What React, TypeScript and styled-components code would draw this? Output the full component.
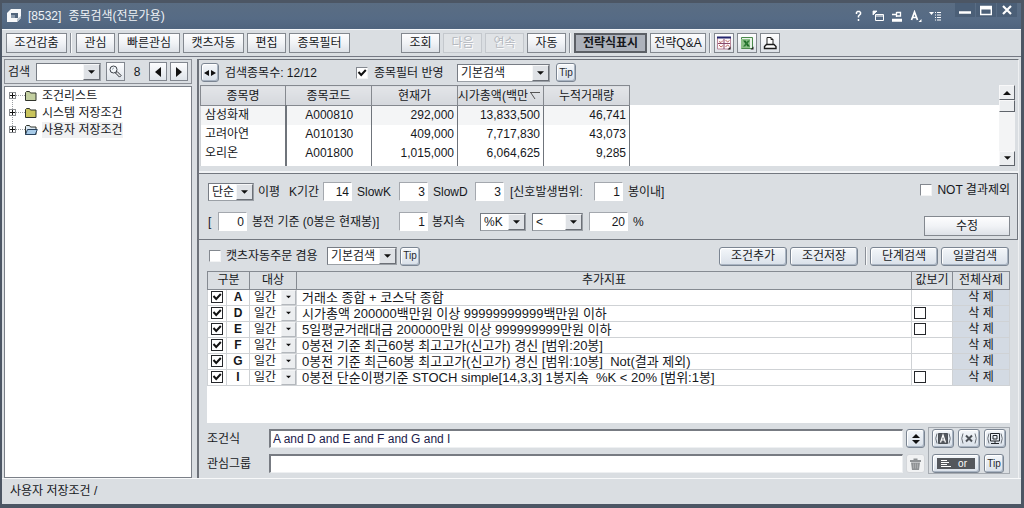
import React, { useState } from "react";
import styled, { createGlobalStyle, css } from "styled-components";

const face = "#dadee2";
const line = "#858a91";
const ink = "#16181c";

const Global = createGlobalStyle`
  * { box-sizing: border-box; }
  body { margin: 0; background: #4c5664; }
  body, button, input, select, table {
    font-family: "Liberation Sans", "Noto Sans CJK KR", sans-serif;
    font-size: 12px;
    line-height: 16px;
    color: ${ink};
  }
  button, input, select { margin: 0; padding: 0; border-radius: 0; }
`;

/* ---------- frame ---------- */

const Frame = styled.div`
  display: flex;
  flex-direction: column;
  min-height: 100vh;
  border: solid #4c5664;
  border-width: 3px 3px 4px 2px;
  background: ${face};
  white-space: nowrap;
`;

const TitleBar = styled.header`
  display: flex;
  align-items: center;
  height: 26px;
  padding: 0 4px;
  background: linear-gradient(#5a6d83, #566b85 60%, #4f647e);
  color: #eef2f6;
`;

const Title = styled.h1`
  flex: 1;
  margin: 0 0 0 6px;
  font-size: 12px;
  line-height: 18px;
  font-weight: 400;
`;

const Code = styled.span`
  margin-right: 7px;
`;

const TitleTools = styled.div`
  display: flex;
  gap: 7px;
  margin-right: 14px;
`;

const WindowTools = styled.div`
  display: flex;
  gap: 1px;
  align-self: flex-start;
`;

const TitleButton = styled.button<{ $framed?: boolean }>`
  display: grid;
  place-items: center;
  width: ${(p) => (p.$framed ? 20 : 12)}px;
  height: ${(p) => (p.$framed ? 14 : 16)}px;
  border: 0;
  background: ${(p) => (p.$framed ? "#4b5f77" : "none")};
  color: #fff;
`;

const Toolbar = styled.nav`
  display: flex;
  align-items: center;
  gap: 3px;
  height: 28px;
  padding: 0 4px;
  border-top: 1px solid #f4f6f8;
  border-bottom: 1px solid #747883;
`;

const Group = styled.div<{ $push?: number }>`
  display: flex;
  align-items: center;
  gap: 3px;
  margin-left: ${(p) => p.$push ?? 0}px;
`;

const Divider = styled.span<{ $h?: number }>`
  width: 2px;
  height: ${(p) => p.$h ?? 20}px;
  border-left: 1px solid #8b9098;
  border-right: 1px solid #f8f9fa;
`;

const ToolButton = styled.button<{ $w: number; $active?: boolean }>`
  display: grid;
  place-items: center;
  width: ${(p) => p.$w}px;
  height: 20px;
  border: 1px solid #83888f;
  background: linear-gradient(#fdfdfe, #f1f3f6 50%, #dde1e7);
  &:disabled {
    color: #b4b8be;
    border-color: #c4c8cd;
    background: #e0e3e6;
    text-shadow: 1px 1px #fff;
  }
  ${(p) =>
    p.$active &&
    css`
      border: 2px solid #5c6066;
      background: #adb2bb;
      font-weight: 700;
    `}
`;

/* ---------- shared controls ---------- */

const RoundButton = styled.button<{ $w: number; $faint?: boolean }>`
  display: grid;
  place-items: center;
  width: ${(p) => p.$w}px;
  height: 19px;
  flex: none;
  border: 1px solid #7b8592;
  border-radius: 3px;
  background: linear-gradient(#f4f7fa, #d9e0e9);
  box-shadow: inset -1px -1px #a9b4c2, inset 1px 1px #fff;
  ${(p) =>
    p.$faint &&
    css`
      border-color: #d3d6da;
      background: #f1f2f3;
      box-shadow: none;
    `}
`;

const TipButton = styled(RoundButton)`
  font-size: 10px;
  line-height: 12px;
  color: #23272e;
`;

const SelectBox = styled.span<{ $w: number }>`
  display: grid;
  grid-template-columns: 1fr 17px;
  width: ${(p) => p.$w}px;
  height: 18px;
  flex: none;
  border: 1px solid #777c84;
  border-right-color: #9ba0a6;
  border-bottom-color: #9ba0a6;
  background: #fff;
  > select {
    grid-area: 1 / 1 / 2 / 3;
    appearance: none;
    width: 100%;
    height: 16px;
    padding: 0 0 0 3px;
    border: 0;
    background: transparent;
    outline: none;
  }
`;

const SelectArrow = styled.span`
  grid-area: 1 / 2;
  display: grid;
  place-items: center;
  height: 16px;
  border: 1px solid #f6f7f8;
  border-right-color: #6c7077;
  border-bottom-color: #6c7077;
  background: #dfe2e6;
  pointer-events: none;
`;

const CheckBox = styled.span<{ $bold?: boolean }>`
  display: grid;
  width: 12px;
  height: 12px;
  flex: none;
  > * {
    grid-area: 1 / 1;
  }
  > input {
    appearance: none;
    width: 12px;
    height: 12px;
    background: #fff;
    border: 1px solid ${(p) => (p.$bold ? "#25272b" : "#f2f3f4")};
    ${(p) => !p.$bold && "border-top-color: #83888f; border-left-color: #83888f;"}
  }
  > svg {
    display: none;
    pointer-events: none;
  }
  > input:checked + svg {
    display: block;
  }
`;

const NumberField = styled.input<{ $w?: number }>`
  width: ${(p) => p.$w ?? 29}px;
  height: 19px;
  flex: none;
  padding: 0 2px;
  border: 1px solid #fff;
  border-top-color: #a4a8ae;
  border-left-color: #a4a8ae;
  background: #fff;
  text-align: right;
  outline: none;
`;

const Text = styled.span<{ $w?: number }>`
  flex: none;
  width: ${(p) => (p.$w ? `${p.$w}px` : "auto")};
`;

const LabelText = styled.label<{ $w?: number }>`
  flex: none;
  width: ${(p) => (p.$w ? `${p.$w}px` : "auto")};
`;

/* ---------- layout of the two panes ---------- */

const Body = styled.div`
  display: flex;
  flex: 1;
  gap: 5px;
  padding: 2px 2px 0;
  border-bottom: 1px solid #f8f9fa;
`;

const Side = styled.aside`
  display: flex;
  flex-direction: column;
  width: 188px;
  flex: none;
`;

const SearchRow = styled.div`
  display: flex;
  align-items: center;
  height: 25px;
  padding: 0 3px;
  margin-bottom: 2px;
  border: 1px solid #8b8f96;
`;

const SmallButton = styled.button<{ $w?: number }>`
  display: grid;
  place-items: center;
  width: ${(p) => p.$w ?? 18}px;
  height: 19px;
  flex: none;
  border: 1px solid #82878f;
  background: linear-gradient(#fcfdfe, #dfe4ea);
`;

const SearchCount = styled.output`
  flex: 1;
  text-align: center;
`;

const Tree = styled.ul`
  flex: 1;
  margin: 0;
  padding: 0 0 0 3px;
  list-style: none;
  background: #fff;
  border: 1px solid #7b8088;
`;

const TreeItem = styled.li`
  display: flex;
  align-items: center;
  height: 17px;
  > svg {
    flex: none;
  }
`;

const TreeName = styled.span<{ $on?: boolean }>`
  margin-left: 4px;
  background: ${(p) => (p.$on ? "#f0f1f2" : "none")};
`;

const Main = styled.main`
  display: flex;
  flex-direction: column;
  flex: 1;
  min-width: 0;
  border: 1px solid #6d727a;
  border-left-width: 2px;
  border-right-color: #eef0f2;
  border-bottom: 0;
`;

const FilterRow = styled.div`
  display: flex;
  align-items: center;
  height: 25px;
  padding: 0 2px;
`;

const Results = styled.div`
  display: flex;
  margin: 0 3px 0 1px;
  background: linear-gradient(${face} 20px, #fff 20px);
`;

const ResultTable = styled.table`
  width: 429px;
  flex: none;
  border-collapse: collapse;
  table-layout: fixed;
  margin-right: auto;
  th {
    height: 20px;
    padding: 0;
    border: 1px solid #85898f;
    background: linear-gradient(#e3e5e8, #d5d8dd);
    font-weight: 400;
    overflow: hidden;
  }
  td {
    height: 19px;
    padding: 0 3px 0 4px;
    border: solid #6f747b;
    border-width: 0 1px;
    text-align: right;
  }
  td:first-child {
    text-align: left;
    border-left-color: #d0d3d7;
    border-right-width: 2px;
  }
  td:nth-child(2) {
    text-align: center;
  }
  tbody tr:first-child {
    background: #f4f5f6;
  }
  tbody tr:last-child td {
    height: 22px;
    padding-bottom: 3px;
  }
`;

const SortHead = styled.span`
  display: flex;
  align-items: center;
  justify-content: flex-end;
  gap: 2px;
  padding-right: 3px;
  overflow: hidden;
  > svg {
    flex: none;
  }
`;

const ScrollBar = styled.div`
  display: flex;
  flex-direction: column;
  width: 16px;
  background: #f3f4f5;
`;

const ScrollPart = styled.button<{ $h: number }>`
  display: grid;
  place-items: center;
  height: ${(p) => p.$h}px;
  border: 1px solid #f8f8f9;
  border-right-color: #5f646b;
  border-bottom-color: #5f646b;
  background: #eceef0;
  &:last-child {
    margin-top: auto;
  }
`;

const ConditionPanel = styled.section`
  display: flex;
  justify-content: space-between;
  margin-top: 7px;
  border: 1px solid #72777f;
  border-left: 0;
  box-shadow: 0 -2px #f2f4f6;
`;

const Fields = styled.div`
  display: flex;
  flex-direction: column;
  gap: 10px;
  padding: 8px 0 7px 9px;
`;

const FieldRow = styled.div`
  display: flex;
  align-items: center;
  height: 20px;
`;

const ApplyColumn = styled.div`
  display: flex;
  flex-direction: column;
  align-items: flex-end;
  justify-content: space-between;
  padding: 8px 7px 3px 0;
`;

const Pair = styled.div`
  display: flex;
  align-items: center;
  gap: 5px;
`;

const ActionGroup = styled.div`
  display: flex;
  align-items: center;
  gap: 3px;
  margin-left: auto;
  padding-right: 1px;
`;

const ListPanel = styled.section`
  display: flex;
  flex-direction: column;
  flex: 1;
  padding: 7px 8px 4px 8px;
`;

const ListTools = styled.div`
  display: flex;
  align-items: center;
  height: 19px;
  margin-bottom: 5px;
  padding-left: 2px;
`;

const ListArea = styled.div`
  flex: 1;
  background: #fff;
  padding-bottom: 32px;
`;

const ConditionTable = styled.table`
  width: 100%;
  border-collapse: collapse;
  table-layout: fixed;
  th {
    height: 18px;
    padding: 0;
    border: 1px solid ${line};
    background: ${face};
    font-weight: 400;
  }
  td {
    height: 16px;
    padding: 0;
    border: 1px solid #cfd2d5;
    line-height: 15px;
  }
`;

const CheckCell = styled.td`
  > ${CheckBox} {
    margin: 0 auto;
  }
`;

const KeyCell = styled.td`
  text-align: center;
  font-weight: 700;
`;

const TermCell = styled.td`
  > span {
    display: flex;
    align-items: center;
    justify-content: space-between;
    padding-left: 4px;
  }
`;

const DropButton = styled.button`
  display: grid;
  place-items: center;
  width: 15px;
  height: 15px;
  border: 1px solid #f4f5f6;
  border-right-color: #b4b8bd;
  border-bottom-color: #b4b8bd;
  background: #eceef0;
`;

const DescCell = styled.td`
  && {
    padding-left: 5px;
    font-size: 13px;
    white-space: pre;
  }
`;

const ShowCell = styled.td`
  && {
    padding-left: 2px;
  }
`;

const DeleteButton = styled.button`
  display: block;
  width: 100%;
  height: 15px;
  border: 0;
  background: #d3dae3;
  line-height: 15px;
`;

const FormulaArea = styled.div`
  display: flex;
  align-items: flex-start;
  gap: 3px;
  margin-top: 4px;
`;

const FormulaRows = styled.div`
  display: grid;
  grid-template-columns: 59px 1fr 19px;
  row-gap: 6px;
  column-gap: 3px;
  flex: 1;
  align-items: center;
  padding-top: 2px;
`;

const FormulaInput = styled.input`
  width: 100%;
  height: 19px;
  padding: 0 2px;
  border: 1px solid #eef0f2;
  border-top: 2px solid #777b82;
  border-left: 2px solid #777b82;
  background: #fff;
  color: #1c1c4c;
  outline: none;
`;

const InsertPanel = styled.div`
  display: grid;
  grid-template-columns: repeat(3, 22px);
  column-gap: 4px;
  row-gap: 6px;
  padding: 1px 3px 0;
  border: 1px solid #a6abb1;
`;

const OrButton = styled(RoundButton)`
  grid-column: span 2;
`;

const OrFace = styled.span`
  display: flex;
  align-items: center;
  justify-content: space-between;
  width: 38px;
  height: 11px;
  padding: 0 8px 0 4px;
  background: #54575c;
  color: #fff;
  font-size: 10px;
  line-height: 10px;
`;

const StatusBar = styled.footer`
  height: 25px;
  padding: 4px 8px;
`;

/* ---------- drawings ---------- */

const Down = ({ w = 7 }: { w?: number }) => (
  <svg width={w} height="4" viewBox="0 0 8 4">
    <path d="M0 0h8L4 4z" fill="#111" />
  </svg>
);

const Tick = () => (
  <svg width="12" height="12" viewBox="0 0 12 12">
    <path d="M2.5 5l2.7 3L9.8 3" fill="none" stroke="#111" strokeWidth="2" />
  </svg>
);

const AppIcon = () => (
  <svg width="16" height="16" viewBox="0 0 16 16">
    <path d="M1 5L5 1h10v9l-4 4H1z" fill="#f7f8fa" />
    <path d="M5 5h7v5H5z" fill="#51647c" />
    <path d="M5 7h4v3H5z" fill="#8c9bad" />
    <path d="M11 14l4-4V8l-4 3z" fill="#b9c3cf" />
  </svg>
);

const Magnifier = () => (
  <svg width="13" height="13" viewBox="0 0 13 13" fill="none">
    <circle cx="4.5" cy="4.5" r="3.5" stroke="#3c4148" fill="#f4f8fb" />
    <path d="M3 4.5L5 2.7" stroke="#8d98a4" />
    <path d="M6.5 8l1.6-1.5 4 4-1.6 1.6z" fill="#e8eaec" stroke="#2e3238" />
  </svg>
);

const Branch = ({ first, last }: { first?: boolean; last?: boolean }) => (
  <svg width="17" height="17" viewBox="0 0 17 17">
    <path
      d={`${first ? "" : "M4.5 0v6"}${last ? "" : "M4.5 11v6"}M8 8.5h9`}
      stroke="#9a9da1"
      strokeDasharray="1 1"
    />
    <rect x="1.500" y="5.500" width="6" height="6" fill="#fff" stroke="#8a8d91" />
    <path d="M2 8.500h5M4.500 6v5" stroke="#111" />
  </svg>
);

const Folder = ({ fill, open }: { fill: string; open?: boolean }) => (
  <svg width="13" height="12" viewBox="0 0 13 12" stroke="#30342c">
    <path d="M.5 10.500V2.500l1-1h3l1 1.500h5.500v7.500z" fill={fill} />
    {open && <path d="M.5 10.500l2-5h9.800l-2 5z" fill="#a8cbe8" stroke="#28425e" />}
  </svg>
);

const ToolIcon = ({ kind }: { kind: "chart" | "sheet" | "print" }) => (
  <svg width="14" height="14" viewBox="0 0 14 14" fill="none">
    {kind === "chart" && (
      <>
        <path d="M.5 1.500h13v11.500H.5z" fill="#fdf6f8" stroke="#b9879a" />
        <path d="M0 1.500h14" stroke="#22256e" strokeWidth="2" />
        <path d="M7 3v10M1 7.500h12" stroke="#8a4a6a" />
        <path d="M2 5.500l2 1 2-2M8.500 4l2 2 2-1.500M2 9l2 2 2-1.500M8.500 11l2-2 2 1.500" stroke="#c06c62" />
        <path d="M13.500 10.500v3h-3z" fill="#222" />
      </>
    )}
    {kind === "sheet" && (
      <>
        <path d="M1.500 1.500h11v11h-11z" fill="#e9f3e8" stroke="#4b8a4c" />
        <path d="M1 3h9v9H1z" fill="#8cc088" />
        <path d="M3 4.500h2.500l4.500 6H7.500z" fill="#1f6b28" />
        <path d="M10 4.500H7.800L3 10.500h2.200z" fill="#2f7d37" />
        <path d="M13.500 10.500v3h-3z" fill="#222" />
      </>
    )}
    {kind === "print" && (
      <>
        <path d="M4 8.500V1.500h4l2 2v5" fill="#fff" stroke="#222" />
        <path d="M8 1.500v2h2" stroke="#222" />
        <path d="M1.500 12.500v-2l2-2h7.500l2 2v2z" fill="#fff" stroke="#1b1b1b" strokeWidth="1.400" />
      </>
    )}
  </svg>
);

const TitleIcon = ({ kind }: { kind: string }) => (
  <svg width="12" height="12" viewBox="0 0 12 12" fill="none" stroke="#fff">
    {kind === "help" && <path d="M3.500 4V2.500l1-1h2l1 1V4L5.500 6v1.500M5.500 9v2" strokeWidth="1.500" />}
    {kind === "copy" && (
      <>
        <path d="M3.500 4.500h8v6h-8zM3.500 6h8" />
        <path d="M1 5V1h4zM1 1.500h4" fill="#fff" strokeWidth=".8" />
      </>
    )}
    {kind === "pin" && <path d="M1 4.500h4M5.500 2v5M5.500 2.500h4v3.500h-4M1 9.500h10M1 11h10" strokeWidth="1.300" />}
    {kind === "font" && (
      <>
        <path d="M1.500 10L4.500 2l3 8M2.500 7.500h4" strokeWidth="1.700" />
        <path d="M11.500 9v3h-3z" fill="#fff" stroke="none" />
      </>
    )}
    {kind === "menu" && (
      <>
        <path d="M0 2h5L2.500 5z" fill="#fff" stroke="none" />
        <path d="M6 2.500h1M8 2.500h4M6 5h1M8 5h4M6 7.500h1M8 7.500h4M6 10h1M8 10h4" />
      </>
    )}
    {kind === "min" && <path d="M0 8.500h12" strokeWidth="2.500" />}
    {kind === "max" && (
      <>
        <path d="M.7 2.500h10.600v8H.7z" strokeWidth="1.400" />
        <path d="M0 4h12" strokeWidth="3" />
      </>
    )}
    {kind === "close" && <path d="M2 2l8 8M10 2l-8 8" strokeWidth="2.200" />}
  </svg>
);

const InsertIcon = ({ kind }: { kind: "letter" | "cross" | "screen" }) => (
  <svg width="18" height="13" viewBox="0 0 18 13" fill="none" stroke="#4c5157">
    <path d="M3 1.500Q.5 6.500 3 11.500M15 1.500q2.500 5 0 10" stroke="#6d737a" />
    {kind === "letter" && (
      <>
        <path d="M4.500 1.500h9v10h-9z" fill="#55595f" />
        <path d="M6.500 10.500L9 3l2.500 7.500M7.200 8h3.600" stroke="#fff" strokeWidth="1.200" />
      </>
    )}
    {kind === "cross" && <path d="M6 3.500l6 6M12 3.500l-6 6" strokeWidth="2" />}
    {kind === "screen" && (
      <>
        <path d="M4.500 1.500h9v7.500h-9z" stroke="#22262b" />
        <path d="M7 3.500h4v3.500H7zM5 11.500h8M9 9v2" stroke="#22262b" />
      </>
    )}
  </svg>
);

/* ---------- helpers ---------- */

const Select = ({ w, label, options }: { w: number; label: string; options: string[] }) => (
  <SelectBox $w={w}>
    <select aria-label={label}>
      {options.map((o) => (
        <option key={o}>{o}</option>
      ))}
    </select>
    <SelectArrow>
      <Down />
    </SelectArrow>
  </SelectBox>
);

const Check = ({ id, label, on, bold }: { id?: string; label?: string; on?: boolean; bold?: boolean }) => (
  <CheckBox $bold={bold}>
    <input type="checkbox" id={id} aria-label={label} defaultChecked={on} />
    <Tick />
  </CheckBox>
);

const Gap = styled.span<{ $w: number }>`
  flex: none;
  width: ${(p) => p.$w}px;
`;

const Col = styled.col<{ $w: number }>`
  width: ${(p) => p.$w}px;
`;

const stocks = [
  ["삼성화재", "A000810", "292,000", "13,833,500", "46,741"],
  ["고려아연", "A010130", "409,000", "7,717,830", "43,073"],
  ["오리온", "A001800", "1,015,000", "6,064,625", "9,285"],
];

const conditions = [
  { key: "A", text: "거래소 종합 + 코스닥 종합", show: false },
  { key: "D", text: "시가총액 200000백만원 이상 99999999999백만원 이하", show: true },
  { key: "E", text: "5일평균거래대금 200000만원 이상 999999999만원 이하", show: true },
  { key: "F", text: "0봉전 기준 최근60봉 최고고가(신고가) 경신 [범위:20봉]", show: false },
  { key: "G", text: "0봉전 기준 최근60봉 최고고가(신고가) 경신 [범위:10봉]  Not(결과 제외)", show: false },
  { key: "I", text: "0봉전 단순이평기준 STOCH simple[14,3,3] 1봉지속  %K < 20% [범위:1봉]", show: true },
];

export default function App() {
  const [formula, setFormula] = useState("A and D and E and F and G and I");

  return (
    <>
      <Global />
      <Frame>
        <TitleBar>
          <AppIcon />
          <Title>
            <Code>[8532]</Code>종목검색(전문가용)
          </Title>
          <TitleTools>
            {["help", "copy", "pin", "font", "menu"].map((k) => (
              <TitleButton key={k} aria-label={k}>
                <TitleIcon kind={k} />
              </TitleButton>
            ))}
          </TitleTools>
          <WindowTools>
            {["min", "max", "close"].map((k) => (
              <TitleButton key={k} $framed aria-label={k}>
                <TitleIcon kind={k} />
              </TitleButton>
            ))}
          </WindowTools>
        </TitleBar>

        <Toolbar>
          <ToolButton $w={61}>조건감춤</ToolButton>
          <Divider />
          <Group $push={1}>
            <ToolButton $w={39}>관심</ToolButton>
            <ToolButton $w={62}>빠른관심</ToolButton>
            <ToolButton $w={61}>캣츠자동</ToolButton>
            <ToolButton $w={39}>편집</ToolButton>
            <ToolButton $w={61}>종목필터</ToolButton>
          </Group>
          <Group $push={48}>
            <ToolButton $w={39}>조회</ToolButton>
            <ToolButton $w={39} disabled>
              다음
            </ToolButton>
            <ToolButton $w={39} disabled>
              연속
            </ToolButton>
            <ToolButton $w={39}>자동</ToolButton>
          </Group>
          <Divider />
          <ToolButton $w={73} $active>
            전략식표시
          </ToolButton>
          <ToolButton $w={56}>전략Q&amp;A</ToolButton>
          <Divider />
          <Group>
            <ToolButton $w={20} aria-label="차트">
              <ToolIcon kind="chart" />
            </ToolButton>
            <ToolButton $w={20} aria-label="엑셀">
              <ToolIcon kind="sheet" />
            </ToolButton>
            <ToolButton $w={20} aria-label="인쇄">
              <ToolIcon kind="print" />
            </ToolButton>
          </Group>
        </Toolbar>

        <Body>
          <Side>
            <SearchRow>
              <LabelText $w={28} htmlFor="find">
                검색
              </LabelText>
              <SelectBox $w={65}>
                <select id="find">
                  <option></option>
                </select>
                <SelectArrow>
                  <Down />
                </SelectArrow>
              </SelectBox>
              <Gap $w={5} />
              <SmallButton $w={19} aria-label="찾기">
                <Magnifier />
              </SmallButton>
              <SearchCount>8</SearchCount>
              <SmallButton aria-label="이전">
                <svg width="6" height="10" viewBox="0 0 6 10">
                  <path d="M6 0v10L0 5z" fill="#111" />
                </svg>
              </SmallButton>
              <Gap $w={3} />
              <SmallButton aria-label="다음">
                <svg width="6" height="10" viewBox="0 0 6 10">
                  <path d="M0 0v10l6-5z" fill="#111" />
                </svg>
              </SmallButton>
            </SearchRow>
            <Tree>
              <TreeItem>
                <Branch first />
                <Folder fill="#c3cfa0" />
                <TreeName>조건리스트</TreeName>
              </TreeItem>
              <TreeItem>
                <Branch />
                <Folder fill="#c9c45c" />
                <TreeName>시스템 저장조건</TreeName>
              </TreeItem>
              <TreeItem>
                <Branch last />
                <Folder fill="#dbe8f2" open />
                <TreeName $on>사용자 저장조건</TreeName>
              </TreeItem>
            </Tree>
          </Side>

          <Main>
            <FilterRow>
              <RoundButton $w={18} aria-label="너비 조절">
                <svg width="12" height="6" viewBox="0 0 12 6">
                  <path d="M5 0v6L0 3zM7 0v6l5-3z" fill="#111" />
                </svg>
              </RoundButton>
              <Gap $w={6} />
              <Text $w={131}>검색종목수: 12/12</Text>
              <Check id="filter" on />
              <Gap $w={6} />
              <LabelText $w={83} htmlFor="filter">
                종목필터 반영
              </LabelText>
              <Select w={93} label="필터" options={["기본검색"]} />
              <Gap $w={6} />
              <TipButton $w={20}>Tip</TipButton>
            </FilterRow>

            <Results>
              <ResultTable>
                <colgroup>
                  <Col $w={85} />
                  <Col $w={86} />
                  <Col $w={86} />
                  <Col $w={86} />
                  <Col $w={86} />
                </colgroup>
                <thead>
                  <tr>
                    <th>종목명</th>
                    <th>종목코드</th>
                    <th>현재가</th>
                    <th>
                      <SortHead>
                        시가총액(백만
                        <svg width="10" height="8" viewBox="0 0 10 8" fill="none" stroke="#555">
                          <path d="M0 .5h10M1 1l4 6" />
                        </svg>
                      </SortHead>
                    </th>
                    <th>누적거래량</th>
                  </tr>
                </thead>
                <tbody>
                  {stocks.map((row) => (
                    <tr key={row[1]}>
                      {row.map((cell) => (
                        <td key={cell}>{cell}</td>
                      ))}
                    </tr>
                  ))}
                </tbody>
              </ResultTable>
              <ScrollBar>
                <ScrollPart $h={15} aria-label="위로">
                  <svg width="8" height="4" viewBox="0 0 8 4">
                    <path d="M0 4h8L4 0z" fill="#111" />
                  </svg>
                </ScrollPart>
                <ScrollPart $h={12} aria-label="스크롤" />
                <ScrollPart $h={15} aria-label="아래로">
                  <Down />
                </ScrollPart>
              </ScrollBar>
            </Results>

            <ConditionPanel>
              <Fields>
                <FieldRow>
                  <Select w={46} label="이동평균 방식" options={["단순"]} />
                  <Gap $w={4} />
                  <Text $w={31}>이평</Text>
                  <LabelText $w={34} htmlFor="k">
                    K기간
                  </LabelText>
                  <NumberField id="k" defaultValue="14" />
                  <Gap $w={5} />
                  <LabelText $w={42} htmlFor="sk">
                    SlowK
                  </LabelText>
                  <NumberField id="sk" defaultValue="3" />
                  <Gap $w={5} />
                  <LabelText $w={42} htmlFor="sd">
                    SlowD
                  </LabelText>
                  <NumberField id="sd" defaultValue="3" />
                  <Gap $w={6} />
                  <LabelText $w={84} htmlFor="range">
                    [신호발생범위:
                  </LabelText>
                  <NumberField id="range" defaultValue="1" />
                  <Gap $w={5} />
                  <Text>봉이내]</Text>
                </FieldRow>
                <FieldRow>
                  <Text $w={10}>[</Text>
                  <NumberField aria-label="봉전" defaultValue="0" />
                  <Gap $w={5} />
                  <Text $w={147}>봉전 기준 (0봉은 현재봉)]</Text>
                  <NumberField aria-label="봉지속" defaultValue="1" />
                  <Gap $w={4} />
                  <Text $w={48}>봉지속</Text>
                  <Select w={46} label="지표" options={["%K"]} />
                  <Gap $w={6} />
                  <Select w={51} label="비교" options={["<"]} />
                  <Gap $w={6} />
                  <NumberField $w={39} aria-label="기준값" defaultValue="20" />
                  <Gap $w={5} />
                  <Text>%</Text>
                </FieldRow>
              </Fields>
              <ApplyColumn>
                <Pair>
                  <Check id="not" />
                  <LabelText htmlFor="not">NOT 결과제외</LabelText>
                </Pair>
                <ToolButton $w={86}>수정</ToolButton>
              </ApplyColumn>
            </ConditionPanel>

            <ListPanel>
              <ListTools>
                <Check id="auto" />
                <Gap $w={5} />
                <LabelText $w={101} htmlFor="auto">
                  캣츠자동주문 겸용
                </LabelText>
                <Select w={70} label="주문 검색" options={["기본검색"]} />
                <Gap $w={3} />
                <TipButton $w={20}>Tip</TipButton>
                <ActionGroup>
                  <RoundButton $w={68}>조건추가</RoundButton>
                  <RoundButton $w={68}>조건저장</RoundButton>
                  <Gap $w={1} />
                  <Divider $h={18} />
                  <RoundButton $w={68}>단계검색</RoundButton>
                  <RoundButton $w={68}>일괄검색</RoundButton>
                </ActionGroup>
              </ListTools>

              <ListArea>
                <ConditionTable>
                  <colgroup>
                    <Col $w={19} />
                    <Col $w={23} />
                    <Col $w={47} />
                    <col />
                    <Col $w={41} />
                    <Col $w={57} />
                  </colgroup>
                  <thead>
                    <tr>
                      <th colSpan={2}>구분</th>
                      <th>대상</th>
                      <th>추가지표</th>
                      <th>값보기</th>
                      <th>전체삭제</th>
                    </tr>
                  </thead>
                  <tbody>
                    {conditions.map((c) => (
                      <tr key={c.key}>
                        <CheckCell>
                          <Check bold on label={`${c.key} 사용`} />
                        </CheckCell>
                        <KeyCell>{c.key}</KeyCell>
                        <TermCell>
                          <span>
                            일간
                            <DropButton aria-label={`${c.key} 대상`}>
                              <Down w={5} />
                            </DropButton>
                          </span>
                        </TermCell>
                        <DescCell>{c.text}</DescCell>
                        <ShowCell>{c.show && <Check bold label={`${c.key} 값보기`} />}</ShowCell>
                        <td>
                          <DeleteButton>삭 제</DeleteButton>
                        </td>
                      </tr>
                    ))}
                  </tbody>
                </ConditionTable>
              </ListArea>

              <FormulaArea>
                <FormulaRows>
                  <LabelText htmlFor="formula">조건식</LabelText>
                  <FormulaInput id="formula" value={formula} onChange={(e) => setFormula(e.target.value)} />
                  <RoundButton $w={19} aria-label="펼치기">
                    <svg width="8" height="10" viewBox="0 0 8 10">
                      <path d="M0 4h8L4 0zM0 6h8l-4 4z" fill="#111" />
                    </svg>
                  </RoundButton>
                  <LabelText htmlFor="group">관심그룹</LabelText>
                  <FormulaInput id="group" />
                  <RoundButton $w={19} $faint aria-label="지우기">
                    <svg width="11" height="12" viewBox="0 0 11 12" fill="#8f9295">
                      <path d="M0 2h3.500V.5h4V2H11v2H0zM1 4.500h9L9 12H2z" />
                      <path d="M3.500 5.500v5M5.500 5.500v5M7.500 5.500v5" stroke="#b4b6b8" strokeWidth=".7" />
                    </svg>
                  </RoundButton>
                </FormulaRows>
                <InsertPanel>
                  <RoundButton $w={22} aria-label="문자">
                    <InsertIcon kind="letter" />
                  </RoundButton>
                  <RoundButton $w={22} aria-label="삭제">
                    <InsertIcon kind="cross" />
                  </RoundButton>
                  <RoundButton $w={22} aria-label="화면">
                    <InsertIcon kind="screen" />
                  </RoundButton>
                  <OrButton $w={48}>
                    <OrFace>
                      <svg width="10" height="8" viewBox="0 0 10 8" stroke="#fff">
                        <path d="M0 .5h6M0 2.500h8M0 4.500h6M0 6.500h10" />
                      </svg>
                      or
                    </OrFace>
                  </OrButton>
                  <TipButton $w={20}>Tip</TipButton>
                </InsertPanel>
              </FormulaArea>
            </ListPanel>
          </Main>
        </Body>
        <StatusBar>사용자 저장조건 /</StatusBar>
      </Frame>
    </>
  );
}
